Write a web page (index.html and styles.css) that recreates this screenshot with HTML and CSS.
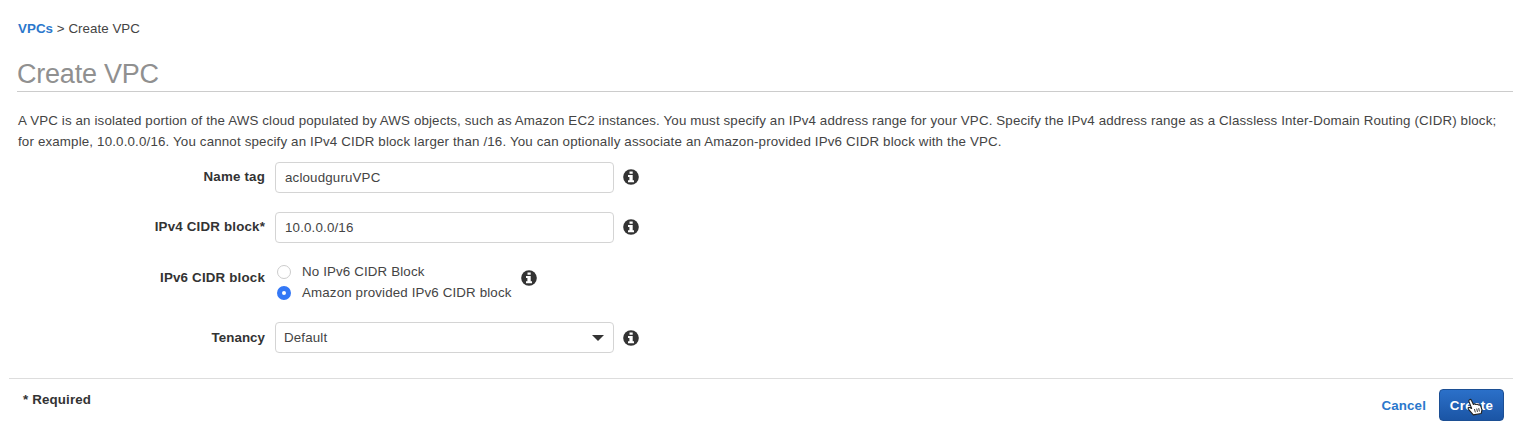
FILE: index.html
```html
<!DOCTYPE html>
<html lang="en">
<head>
<meta charset="utf-8">
<title>Create VPC</title>
<link rel="stylesheet" href="styles.css">
</head>
<body>
<svg class="defs" width="0" height="0" aria-hidden="true">
  <symbol id="info" viewBox="0 0 16 16">
    <circle cx="8" cy="8" r="7.8" fill="#333"/>
    <path fill="#fff" d="M6.500 2.400h3.200v2.400H6.500zM5 6.100h4.700v5.200H11v2H5v-2h1.400V8H5z"/>
  </symbol>
</svg>
<nav class="breadcrumb"><a href="#">VPCs</a> &gt; <span>Create VPC</span></nav>
<h1 class="title">Create VPC</h1>
<p class="intro"><span class="line line-one">A VPC is an isolated portion of the AWS cloud populated by AWS objects, such as Amazon EC2 instances. You must specify an IPv4 address range for your VPC. Specify the IPv4 address range as a Classless Inter-Domain Routing (CIDR) block;</span> <span class="line line-two">for example, 10.0.0.0/16. You cannot specify an IPv4 CIDR block larger than /16. You can optionally associate an Amazon-provided IPv6 CIDR block with the VPC.</span></p>
<form class="form">
  <div class="row">
    <label class="label" for="name">Name tag</label>
    <input class="field" id="name" type="text" value="acloudguruVPC">
    <svg class="info"><use href="#info"/></svg>
  </div>
  <div class="row">
    <label class="label" for="cidr">IPv4 CIDR block*</label>
    <input class="field" id="cidr" type="text" value="10.0.0.0/16">
    <svg class="info"><use href="#info"/></svg>
  </div>
  <div class="row row-radios">
    <span class="label">IPv6 CIDR block</span>
    <div class="radios">
      <label class="option"><input class="radio" type="radio" name="ipv6"><span>No IPv6 CIDR Block</span></label>
      <label class="option"><input class="radio" type="radio" name="ipv6" checked><span>Amazon provided IPv6 CIDR block</span></label>
    </div>
    <svg class="info"><use href="#info"/></svg>
  </div>
  <div class="row row-tenancy">
    <span class="label">Tenancy</span>
    <div class="field select"><span>Default</span><i class="caret"></i></div>
    <svg class="info"><use href="#info"/></svg>
  </div>
</form>
<footer class="footer">
  <span class="required">* Required</span>
  <div class="actions">
    <a class="cancel" href="#">Cancel</a>
    <button class="create" type="button">Create
      <svg class="cursor" viewBox="0 0 14 16"><path fill="#fff" stroke="#222" stroke-width="1" stroke-linejoin="round" d="M5.500 15 1.500 10.400Q.2 8.700 1.700 8.300l2.300 1L1.600 3Q1.300 1.600 2.400 1.300q1-.2 1.500.9l1.700 3.500q1.300-.9 2.200.1 1.400-.7 2.200.4 1.700-.4 2.100 1l1.100 3.400-.7 3.200z"/><path stroke="#222" stroke-width=".8" d="m6.500 9.800.8 3M8.500 9.400l.7 3M10.300 9l.6 3"/></svg>
    </button>
  </div>
</footer>
</body>
</html>
```

FILE: styles.css
```css
* { box-sizing: border-box; }
body {
  margin: 0;
  height: 435px;
  overflow: hidden;
  background: #fff;
  color: #444;
  font: 13.33px/20px "Liberation Sans", Arial, sans-serif;
  letter-spacing: .14px;
}
.defs { display: block; height: 0; }
a { color: #2b78cc; font-weight: bold; text-decoration: none; }
.breadcrumb { padding: 19px 0 0 18px; height: 39px; letter-spacing: .05px; }
.title {
  margin: 0 0 0 17px;
  height: 53px;
  padding-top: 20px;
  border-bottom: 1px solid #ccc;
  color: #909090;
  font-size: 27px;
  font-weight: normal;
  letter-spacing: -.22px;
  line-height: 30px;
}
.intro { margin: 0; padding: 19px 0 0 18px; height: 69px; line-height: 20.5px; }
.line { display: block; white-space: nowrap; }
.line-one { letter-spacing: .138px; }
.line-two { letter-spacing: .158px; }
.row {
  display: grid;
  grid-template-columns: 265px 339px 16px;
  column-gap: 10px;
  align-items: center;
  height: 32px;
  margin-bottom: 18px;
}
.label { color: #333; font-weight: bold; letter-spacing: .18px; text-align: right; }
.row-tenancy .label { letter-spacing: .05px; }
.field {
  width: 339px;
  height: 31px;
  padding: 0 9px;
  border: 1px solid #d4d4d4;
  border-radius: 4px;
  background: #fff;
  color: #444;
  font: inherit;
  letter-spacing: .16px;
}
.info { display: block; width: 16px; height: 16px; margin-left: -.6px; }
.row-radios {
  grid-template-columns: 265px 237px 16px;
  height: 50px;
  margin-top: -8px;
  margin-bottom: 19px;
}
.radios { padding-top: 9px; }
.option { display: flex; align-items: center; height: 20.5px; white-space: nowrap; }
.radio {
  appearance: none;
  width: 14px;
  height: 14px;
  margin: 0 11px 0 2px;
  border: 1px solid #ccc;
  border-radius: 50%;
  background: #fff;
}
.radio:checked { border: 5px solid #3478f6; }
.row-tenancy { margin-bottom: 0; }
.select { display: flex; align-items: center; justify-content: space-between; margin-bottom: 1px; padding: 1px 8px 0; }
.caret { margin-right: 1px; border: 6px solid transparent; border-top-color: #333; border-bottom: 0; }
.footer {
  display: flex;
  justify-content: space-between;
  align-items: flex-start;
  margin: 24px 0 0 9px;
  padding: 10px 9px 0 14px;
  border-top: 1px solid #ddd;
}
.required { padding-top: 1px; color: #333; font-weight: bold; }
.actions { display: flex; align-items: center; gap: 13px; }
.cancel { padding-top: 2px; }
.create {
  position: relative;
  width: 65px;
  height: 32px;
  padding: 2px 0 0;
  border: 1px solid #1c4f94;
  border-radius: 4px;
  background: linear-gradient(#2b70c9, #1b55a5);
  color: #fff;
  font: inherit;
  font-weight: bold;
  letter-spacing: .3px;
}
.cursor { position: absolute; left: 27px; top: 8px; width: 16px; height: 18px; }
```
